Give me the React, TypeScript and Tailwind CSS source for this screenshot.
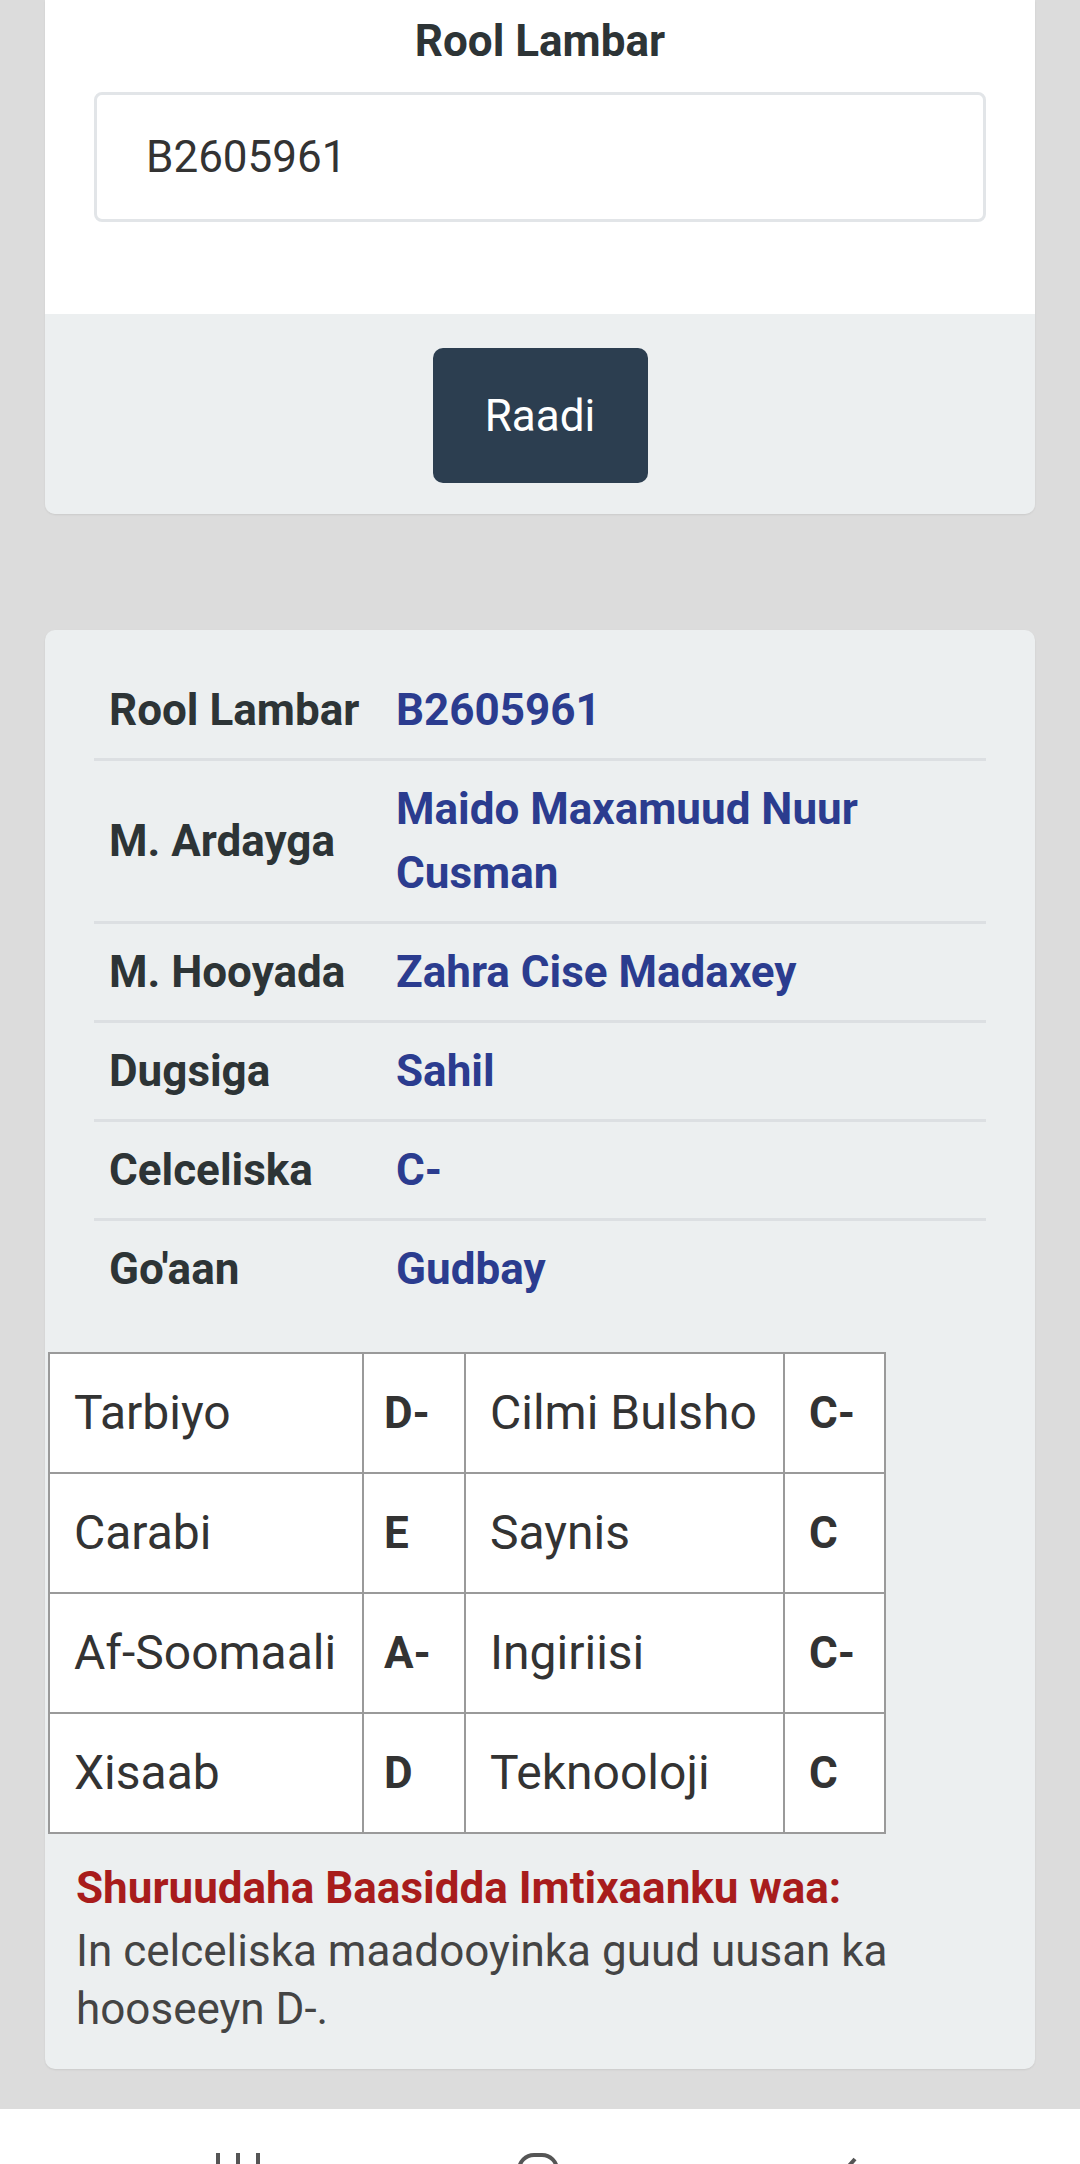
import React from "react";

const rows: { label: string; value: string }[] = [
  { label: "Rool Lambar", value: "B2605961" },
  { label: "M. Ardayga", value: "Maido Maxamuud Nuur Cusman" },
  { label: "M. Hooyada", value: "Zahra Cise Madaxey" },
  { label: "Dugsiga", value: "Sahil" },
  { label: "Celceliska", value: "C-" },
  { label: "Go'aan", value: "Gudbay" },
];

const grades: [string, string, string, string][] = [
  ["Tarbiyo", "D-", "Cilmi Bulsho", "C-"],
  ["Carabi", "E", "Saynis", "C"],
  ["Af-Soomaali", "A-", "Ingiriisi", "C-"],
  ["Xisaab", "D", "Teknooloji", "C"],
];

export default function App() {
  return (
    <div className="w-[1080px] h-[2164px] overflow-hidden bg-[#dcdcdc] font-['Roboto','Noto_Sans',sans-serif] flex flex-col">
      {/* Search card */}
      <div className="shrink-0 mx-[45px] rounded-b-[10px] overflow-hidden shadow-[0_1px_2px_rgba(0,0,0,0.08)]">
        <div className="h-[314px] bg-white px-[49px] pt-[15px] flex flex-col">
          <div className="text-center text-[44px] leading-[52px] font-bold text-[#2d3436]">
            Rool Lambar
          </div>
          <div className="mt-[25px] h-[130px] border-[3px] border-[#e2e5e8] rounded-[8px] bg-white flex items-center pl-[49px] text-[44px] text-[#333]">
            B2605961
          </div>
        </div>
        <div className="h-[200px] bg-[#eceff0] flex justify-center pt-[34px]">
          <button className="w-[215px] h-[135px] rounded-[10px] bg-[#2c3e50] text-white text-[44px] leading-none">
            Raadi
          </button>
        </div>
      </div>

      {/* Result card */}
      <div className="shrink-0 mx-[45px] mt-[116px] bg-[#eceff0] rounded-[10px] pt-[32px] pb-[31px] shadow-[0_1px_2px_rgba(0,0,0,0.08)]">
        <div className="mx-[49px] flex flex-col">
          {rows.map((r, i) => (
            <div
              key={r.label}
              className={
                i < rows.length - 1
                  ? "flex items-center py-[16px] border-b-[3px] border-[#dcdfe2]"
                  : "flex items-center py-[16px]"
              }
            >
              <div className="w-[302px] shrink-0 pl-[15px] text-[44px] leading-[64px] font-bold text-[#2d3436]">
                {r.label}
              </div>
              <div className="flex-1 pr-[15px] text-[44px] leading-[64px] font-bold text-[#2b3c8f]">
                {r.value}
              </div>
            </div>
          ))}
        </div>

        <table className="ml-[3px] mt-[35px] border-collapse bg-white text-[#333]">
          <tbody>
            {grades.map((g) => (
              <tr key={g[0]}>
                <td className="w-[314px] h-[120px] border-2 border-[#9a9a9a] pl-[24px] text-[48px]">{g[0]}</td>
                <td className="w-[102px] h-[120px] border-2 border-[#9a9a9a] pl-[20px] text-[44px] font-bold">{g[1]}</td>
                <td className="w-[319px] h-[120px] border-2 border-[#9a9a9a] pl-[24px] text-[48px]">{g[2]}</td>
                <td className="w-[101px] h-[120px] border-2 border-[#9a9a9a] pl-[24px] text-[44px] font-bold">{g[3]}</td>
              </tr>
            ))}
          </tbody>
        </table>

        <div className="pl-[31px] pr-[40px] mt-[24px]">
          <div className="text-[44px] leading-[60px] font-bold text-[#a81c1c]">
            Shuruudaha Baasidda Imtixaanku waa:
          </div>
          <div className="mt-[4px] text-[44px] leading-[58px] text-[#444]">
            In celceliska maadooyinka guud uusan ka hooseeyn D-.
          </div>
        </div>
      </div>

      {/* Navigation bar */}
      <div className="mt-[40px] flex-1 bg-white flex items-start pt-[42px] pl-[214px]">
        <svg width="48" height="40" viewBox="0 0 48 40" className="shrink-0">
          <line x1="4" y1="2" x2="4" y2="40" stroke="#555" strokeWidth="4" />
          <line x1="24" y1="2" x2="24" y2="40" stroke="#555" strokeWidth="4" />
          <line x1="44" y1="2" x2="44" y2="40" stroke="#555" strokeWidth="4" />
        </svg>
        <svg width="42" height="40" viewBox="0 0 42 40" className="shrink-0 ml-[255px] mt-[2px]">
          <rect x="2" y="2" width="38" height="38" rx="15" fill="none" stroke="#555" strokeWidth="4" />
        </svg>
        <svg width="24" height="40" viewBox="0 0 24 40" className="shrink-0 ml-[276px] mt-[6px]">
          <polyline points="20,2 4,20 20,38" fill="none" stroke="#555" strokeWidth="4" />
        </svg>
      </div>
    </div>
  );
}
